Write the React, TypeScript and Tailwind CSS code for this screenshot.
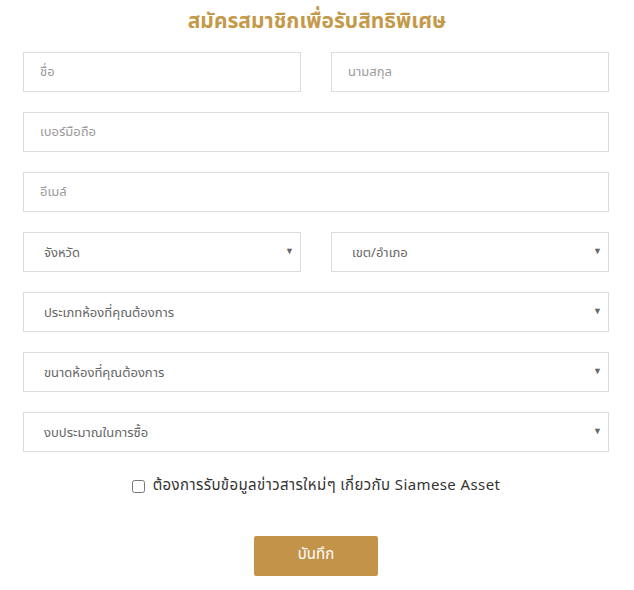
import React from 'react'

const font = { fontFamily: '"Noto Sans Thai", "Noto Sans", "Liberation Sans", sans-serif' }

function TextField({ placeholder }: { placeholder: string }) {
  return (
    <input
      type="text"
      placeholder={placeholder}
      className="h-10 w-full border border-[#dcdcdc] bg-white px-4 text-[13px] text-[#555] placeholder:text-[#9a9a9a] outline-none"
    />
  )
}

function SelectField({ label }: { label: string }) {
  return (
    <div className="relative h-10 w-full border border-[#dcdcdc] bg-white">
      <span className="absolute left-5 top-[11px] text-[13px] text-[#666]">{label}</span>
      <span className="absolute right-[6px] top-[12px] text-[9px] text-[#666]">▼</span>
    </div>
  )
}

export default function App() {
  return (
    <div className="w-[634px] h-[590px] bg-white" style={font}>
      <h1 className="pt-[6px] text-center text-[21px] font-bold text-[#c49a4a] leading-8">
        สมัครสมาชิกเพื่อรับสิทธิพิเศษ
      </h1>
      <form className="ml-[23px] mt-[14px] flex w-[586px] flex-col gap-5">
        <div className="grid grid-cols-2 gap-[30px]">
          <TextField placeholder="ชื่อ" />
          <TextField placeholder="นามสกุล" />
        </div>
        <TextField placeholder="เบอร์มือถือ" />
        <TextField placeholder="อีเมล์" />
        <div className="grid grid-cols-2 gap-[30px]">
          <SelectField label="จังหวัด" />
          <SelectField label="เขต/อำเภอ" />
        </div>
        <SelectField label="ประเภทห้องที่คุณต้องการ" />
        <SelectField label="ขนาดห้องที่คุณต้องการ" />
        <SelectField label="งบประมาณในการซื้อ" />
        <label className="mt-[3px] flex items-center justify-center gap-2 text-[15px] tracking-[0.4px] text-[#333]">
          <input type="checkbox" className="h-[13px] w-[13px]" />
          ต้องการรับข้อมูลข่าวสารใหม่ๆ เกี่ยวกับ Siamese Asset
        </label>
        <div className="mt-[18px] flex justify-center">
          <button
            type="button"
            className="h-10 w-[124px] rounded-[2px] bg-[#c4934a] text-[15px] text-white"
          >
            บันทึก
          </button>
        </div>
      </form>
    </div>
  )
}
